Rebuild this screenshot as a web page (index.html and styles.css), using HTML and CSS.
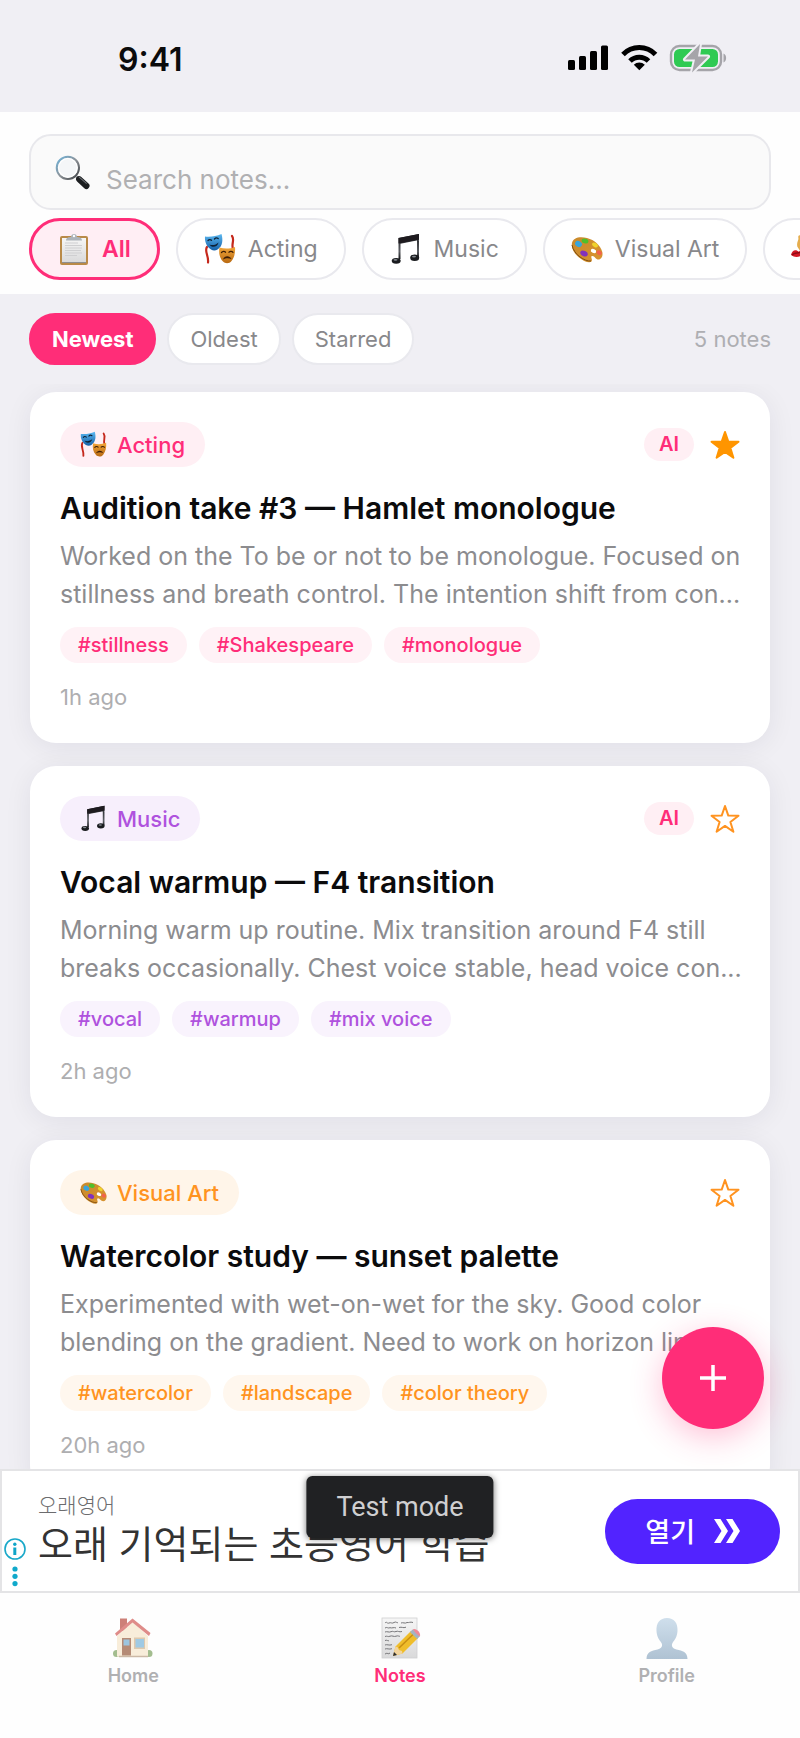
FILE: index.html
```html
<!DOCTYPE html>
<html lang="en">
<head>
<meta charset="utf-8">
<meta name="viewport" content="width=device-width, initial-scale=1">
<title>Notes</title>
<link rel="stylesheet" href="styles.css">
</head>
<body>
<svg class="defs" aria-hidden="true">
  <defs>
    <linearGradient id="g-lens" x1="0" y1="0" x2="1" y2="1"><stop offset="0" stop-color="#6fb4dc"/><stop offset=".5" stop-color="#8d9399"/><stop offset="1" stop-color="#3a3d40"/></linearGradient>
    <linearGradient id="g-blue" x1="0" y1="0" x2="0" y2="1"><stop offset="0" stop-color="#5cb8f0"/><stop offset="1" stop-color="#1560a8"/></linearGradient>
    <linearGradient id="g-gold" x1="0" y1="0" x2="0" y2="1"><stop offset="0" stop-color="#f2a63a"/><stop offset="1" stop-color="#b96a12"/></linearGradient>
    <linearGradient id="g-wood" x1="0" y1="0" x2="1" y2="1"><stop offset="0" stop-color="#c98a2c"/><stop offset="1" stop-color="#d9932f"/></linearGradient>
    <linearGradient id="g-note" x1="0" y1="0" x2="0" y2="1"><stop offset="0" stop-color="#1b1c1f"/><stop offset=".7" stop-color="#5b5e63"/><stop offset="1" stop-color="#16171a"/></linearGradient>
    <linearGradient id="g-bust" x1="0" y1="0" x2="0" y2="1"><stop offset="0" stop-color="#cfdfec"/><stop offset="1" stop-color="#afc2d3"/></linearGradient>
    <linearGradient id="g-paper" x1="0" y1="0" x2="0" y2="1"><stop offset="0" stop-color="#f6f6f6"/><stop offset="1" stop-color="#d9d9da"/></linearGradient>
  </defs>
  <symbol id="i-search" viewBox="0 0 34 34">
    <path d="M21 21l3 3" stroke="#8c9094" stroke-width="3"/>
    <path d="M23.500 23.500l7 6.500" stroke="#1c1e20" stroke-width="6" stroke-linecap="round"/>
    <path d="M23.500 21.500l7 6" stroke="#6d7175" stroke-width="1" stroke-linecap="round"/>
    <circle cx="12.500" cy="12.500" r="10.800" fill="#f4f6f8" stroke="url(#g-lens)" stroke-width="2"/>
    <circle cx="12.500" cy="12.500" r="9" fill="none" stroke="#fff" stroke-width="1"/>
  </symbol>
  <symbol id="i-clip" viewBox="0 0 32 32">
    <rect x="2" y="3" width="28" height="29" rx="2" fill="#b98a48"/>
    <rect x="4" y="5" width="24" height="24.500" fill="url(#g-paper)"/>
    <path d="M4 29.500h24" stroke="#8f8f90" stroke-width="1"/>
    <path d="M7 10h13M7 12.500h17M7 15h17M7 17.500h16M7 20h17M7 22.500h12" stroke="#cfcfd1" stroke-width="1"/>
    <path d="M8 7.500c0-3 3-3.500 5-3.500 0-4 6-4 6 0 2 0 5 .5 5 3.500z" fill="#aeb4ba"/>
    <circle cx="16" cy="3" r="1.200" fill="#fff"/>
  </symbol>
  <symbol id="i-masks" viewBox="0 0 32 32">
    <path d="M3 14c-3 4 2 9 1 15.500M28 3c3 4-1 8 1 13" fill="none" stroke="#c5281c" stroke-width="2.200" stroke-linecap="round"/>
    <path d="M1 3.500c5 .5 11 0 16.500-2.500 1.500 5.500 1.500 12-4 15.500-2 1.300-4.500 1.300-6.500 0C2.500 13.500.5 8.500 1 3.500z" fill="url(#g-blue)"/>
    <path d="M4 7.500c1-1.200 2.500-1.200 3.500-.2M10.500 6c1-1.200 2.700-1.200 3.700-.4" fill="none" stroke="#0e2236" stroke-width="1.300" stroke-linecap="round"/>
    <path d="M5.500 11.500c3 1.200 6.500.5 9-2-.5 4.500-7 6-9 2z" fill="#0e2236"/>
    <path d="M15.500 14.500c5 1.500 10 1.500 15.500-.5.500 5-.5 10.500-3.500 14-2 2.700-6 3-8.500.5-3.500-3.500-4.500-9-3.500-14z" fill="url(#g-gold)"/>
    <path d="M17.500 19.500c1.200-1.400 3-1.500 4-.3M25 19.200c1-1.200 3-1.200 4 .1" fill="none" stroke="#3c1d05" stroke-width="1.300" stroke-linecap="round"/>
    <path d="M19 26.500c1.500-4 6.500-4.200 8.500-.5-2.500-1-6-1-8.500.5z" fill="#3c1d05"/>
  </symbol>
  <symbol id="i-note" viewBox="0 0 32 32">
    <path d="M8.500 5L29 1v6L10.500 10.800V26H8.500zM27 5h2v19h-2z" fill="url(#g-note)"/>
    <path d="M8.500 5L29 1v5.500L8.500 10.500z" fill="#1e1b1f"/>
    <ellipse cx="6.200" cy="27.800" rx="4.500" ry="2.900" fill="#1a1c1f"/>
    <ellipse cx="24.700" cy="24.700" rx="4.500" ry="3.200" fill="#1a1c1f"/>
    <ellipse cx="5.500" cy="26.800" rx="2" ry=".9" fill="#83898f"/>
    <ellipse cx="24" cy="23.600" rx="2" ry=".9" fill="#83898f"/>
  </symbol>
  <symbol id="i-palette" viewBox="0 0 32 32">
    <path d="M1 10C2 4.500 9 3 16 5c7.500 2 13.500 7.500 15.300 14 .9 4-1 7.500-3.800 7.500-3 0-4-4-6.500-3.500-2 .5 1 3.500-.5 5.500-2 2.200-8.500-.5-12.500-4C3 20.500 0 15 1 10z" fill="url(#g-wood)"/>
    <path d="M1 12c1 5 4 9 8 12 3.500 2.500 8 4.500 11 4" fill="none" stroke="#7d4d12" stroke-width="1"/>
    <ellipse cx="22.500" cy="18" rx="2.800" ry="2" fill="#fff" transform="rotate(25 22.500 18)"/>
    <ellipse cx="7.500" cy="11" rx="3.600" ry="2.800" fill="#38a5dc" transform="rotate(30 7.500 11)"/>
    <ellipse cx="14" cy="8" rx="3.500" ry="2.400" fill="#4fc02c" transform="rotate(15 14 8)"/>
    <ellipse cx="24" cy="12" rx="3.200" ry="2" fill="#f0d32d" transform="rotate(35 24 12)"/>
    <ellipse cx="28.200" cy="19.800" rx="2.700" ry="2.200" fill="#f2624c" transform="rotate(35 28.200 19.800)"/>
    <ellipse cx="13" cy="20.500" rx="3.900" ry="2.700" fill="#8231bd" transform="rotate(25 13 20.500)"/>
  </symbol>
  <symbol id="i-dance" viewBox="0 0 32 32">
    <path d="M9 4c1 4-2 5-1 9l2 3" fill="none" stroke="#e5ad4d" stroke-width="3.500" stroke-linecap="round"/>
    <circle cx="15" cy="5" r="4" fill="#5a3016"/>
    <path d="M10 16c4-3 8-3 10 1 3 5 4 8 10 12-9 3-15-2-18-7-4 2-8 3-12 0 1-5 5-6 8-3z" fill="#d31724"/>
    <path d="M1 22c3-3 6-1 8-3M10 26l2 5" stroke="#8e0b16" stroke-width="1.500" fill="none"/>
  </symbol>
  <symbol id="i-home" viewBox="0 0 42 42">
    <circle cx="4.500" cy="36.500" r="3.500" fill="#a3bd8f"/><circle cx="37" cy="36.500" r="3.500" fill="#a3bd8f"/>
    <path d="M8 1.500h7V14H8z" fill="#cd8078"/>
    <path d="M5 19L20.500 5 36 19v20.500H5z" fill="#f8edda"/>
    <path d="M3 16.500L20.500 1.500 38.500 16l-1.500 3L20.500 5.500 4.500 19z" fill="#df8c89"/>
    <path d="M7 39.500h29" stroke="#ccb9a6" stroke-width="1.500"/>
    <rect x="10" y="21" width="9" height="17.500" fill="#b58b76"/><rect x="11.500" y="22.500" width="6" height="6" fill="#9cc5df"/>
    <rect x="22" y="20.500" width="11" height="11.500" fill="#ddc9ae"/><rect x="23.500" y="22" width="8.500" height="8.500" fill="#9fcae4"/>
  </symbol>
  <symbol id="i-memo" viewBox="0 0 42 42">
    <rect x="3" y="1" width="35" height="40" fill="url(#g-paper)" stroke="#d0d0d1" stroke-width=".8"/>
    <path d="M6 6c2-2 2 1 4 0s3 1 5-.5 3 1 4 0M22 6c2-1 4 1 6-.5 2 .5 3-1 6 0M6 11c2-1.500 3 .8 5-.3 2 .8 4-.8 6 .3M20 10.500c3-1 4 1 7-.3M6 15c2-1 4 .8 6-.3s3 .8 5-.2 3 1 6 0M6 19.500c2-1 3 .8 5-.3s4 1 6 0 3 .5 4 0M6 23.500c2-1 3 1 4 0M6 28c2-1 4 .8 7-.3M6 32c2-1 4 .8 7-.3M6 37c3-2 3 1 5-1" fill="none" stroke="#77777a" stroke-width="1"/>
    <path d="M14 39l2.500-9.500L32 14l7 7-15.500 15.500z" fill="#efbd2a"/>
    <path d="M16.500 29.500l2 .5 1.500 3 3 1 .5 2.500L14 39z" fill="#f2d49d"/><path d="M14 39l1-4 3 3z" fill="#2d2d2f"/>
    <path d="M20 31l15-14.500" stroke="#c78d13" stroke-width="1.500"/>
    <path d="M31 15l3-2.800 7 7-2.800 2.800z" fill="#a4b4c0"/><path d="M34 12.200c3-1.500 8 3 7 7-2.500-1-5-3.500-7-7z" fill="#f08a96"/>
  </symbol>
  <symbol id="i-bust" viewBox="0 0 42 42">
    <path d="M21 1c7 0 11 5 10.500 13-.3 6-3 9-5 12-1.500 3 0 5.500 4 6.500 6 1.200 11 2.500 11 9.500H.5C.5 35 5.500 33.700 11.500 32.500c4-1 5.500-3.500 4-6.500-2-3-4.700-6-5-12C10 6 14 1 21 1z" fill="url(#g-bust)"/>
  </symbol>
  <symbol id="i-star" viewBox="0 0 30 30">
    <path d="M15 2l3.300 9.600 10.200.2-8.100 6.200 3 9.700L15 21.900l-8.400 5.800 3-9.700-8.100-6.200 10.200-.2z" stroke-linejoin="round"/>
  </symbol>
</svg>

<div class="app">
  <header class="status">
    <time class="clock">9:41</time>
    <svg class="status-icons" viewBox="0 0 160 30" aria-label="Signal, Wi-Fi, battery charging" role="img">
      <g><rect x="0" y="16" width="7" height="10" rx="1.500"/><rect x="11" y="12" width="7" height="14" rx="1.500"/><rect x="22" y="7" width="7" height="19" rx="1.500"/><rect x="33" y="1.500" width="7" height="24.500" rx="1.500"/></g>
      <g fill="none" stroke="#000" stroke-width="5"><path d="M55 10.500a22.500 22.500 0 0 1 32.500 0"/><path d="M62 17a13 13 0 0 1 18.500 0"/></g>
      <path d="M65.800 20.800a8 8 0 0 1 11 0L71.300 26.300z"/>
      <rect x="103" y="2" width="50" height="24" rx="8.500" fill="none" stroke="#a5a4a9" stroke-width="2.400"/>
      <path d="M155.500 9.500c3.500 1.500 3.500 7.500 0 9z" fill="#a5a4a9"/>
      <rect x="106" y="5" width="44" height="18" rx="5.500" fill="#2fca53"/>
      <path d="M132 0L117 15.500h10L124 28.500 140 12.500h-10z" fill="#a5a4a9" stroke="#f0eff4" stroke-width="4" paint-order="stroke" stroke-linejoin="round"/>
    </svg>
  </header>

  <section class="top">
    <div class="search">
      <label for="q"><svg class="ico-search" aria-label="Search notes" role="img"><use href="#i-search"/></svg></label>
      <input id="q" type="search" placeholder="Search notes...">
    </div>
    <div class="chips">
      <button class="chip on"><svg class="ico"><use href="#i-clip"/></svg>All</button>
      <button class="chip"><svg class="ico"><use href="#i-masks"/></svg>Acting</button>
      <button class="chip"><svg class="ico"><use href="#i-note"/></svg>Music</button>
      <button class="chip"><svg class="ico"><use href="#i-palette"/></svg>Visual Art</button>
      <button class="chip" aria-label="Dance"><svg class="ico"><use href="#i-dance"/></svg></button>
    </div>
  </section>

  <div class="sortbar">
    <button class="sort on">Newest</button>
    <button class="sort">Oldest</button>
    <button class="sort">Starred</button>
    <span class="count">5 notes</span>
  </div>

  <main class="list">
    <article class="card pink">
      <div class="card-head">
        <span class="badge"><svg class="ico-s"><use href="#i-masks"/></svg>Acting</span>
        <span class="ai">AI</span>
        <button class="star full" aria-label="Starred"><svg><use href="#i-star"/></svg></button>
      </div>
      <h2>Audition take #3 — Hamlet monologue</h2>
      <p class="body">Worked on the To be or not to be monologue. Focused on stillness and breath control. The intention shift from con...</p>
      <div class="tags"><span>#stillness</span><span>#Shakespeare</span><span>#monologue</span></div>
      <p class="when">1h ago</p>
    </article>
    <article class="card purple">
      <div class="card-head">
        <span class="badge"><svg class="ico-s"><use href="#i-note"/></svg>Music</span>
        <span class="ai">AI</span>
        <button class="star" aria-label="Star"><svg><use href="#i-star"/></svg></button>
      </div>
      <h2>Vocal warmup — F4 transition</h2>
      <p class="body">Morning warm up routine. Mix transition around F4 still breaks occasionally. Chest voice stable, head voice con...</p>
      <div class="tags"><span>#vocal</span><span>#warmup</span><span>#mix voice</span></div>
      <p class="when">2h ago</p>
    </article>
    <article class="card orange">
      <div class="card-head">
        <span class="badge"><svg class="ico-s"><use href="#i-palette"/></svg>Visual Art</span>
        <button class="star" aria-label="Star"><svg><use href="#i-star"/></svg></button>
      </div>
      <h2>Watercolor study — sunset palette</h2>
      <p class="body">Experimented with wet-on-wet for the sky. Good color blending on the gradient. Need to work on horizon lin...</p>
      <div class="tags"><span>#watercolor</span><span>#landscape</span><span>#color theory</span></div>
      <p class="when">20h ago</p>
    </article>
    <button class="fab" aria-label="New note"><svg viewBox="0 0 26 26"><path d="M13 0v26M0 13h26" stroke="#fff" stroke-width="3.500"/></svg></button>
  </main>

  <aside class="ad" lang="ko">
    <svg class="ad-info" viewBox="0 0 24 52" role="img" aria-label="Ad options">
      <circle cx="12" cy="12" r="10" fill="none" stroke="#19a8c9" stroke-width="1.600"/>
      <path d="M10.300 10.500h3v7.500h-3z" fill="#10a5c8"/><circle cx="11.800" cy="7.200" r="1.700" fill="#10a5c8"/>
      <g fill="#10a9cb"><circle cx="12" cy="32" r="2.600"/><circle cx="12" cy="39.300" r="2.600"/><circle cx="12" cy="46.600" r="2.600"/></g>
    </svg>
    <div class="ad-text">
      <span class="ad-brand">오래영어</span>
      <span class="ad-title">오래 기억되는 초등영어 학습</span>
    </div>
    <button class="ad-cta">열기<svg viewBox="0 0 26 24"><path d="M0 0h6.500l7.500 12-7.500 12H0l7.500-12zM12 0h6.500L26 12l-7.500 12H12l7.500-12z" fill="#fff"/></svg></button>
    <div class="toast" lang="en">Test mode</div>
  </aside>

  <nav class="tabs">
    <a href="#home"><svg><use href="#i-home"/></svg>Home</a>
    <a href="#notes" class="on"><svg><use href="#i-memo"/></svg>Notes</a>
    <a href="#profile"><svg><use href="#i-bust"/></svg>Profile</a>
  </nav>
</div>
</body>
</html>
```
FILE: styles.css
```css
* { box-sizing: border-box; }
body { margin: 0; font-family: Inter, "Noto Sans CJK KR", sans-serif; background: #f0eff4; color: #0b0b0c; }
h2, p { margin: 0; }
button { font: inherit; border: 0; background: none; margin: 0; padding: 0; color: inherit; flex: none; }
svg { display: block; flex: none; }
.defs { position: absolute; width: 0; height: 0; }

.app { display: flex; flex-direction: column; height: 100vh; overflow: hidden; }

.status { display: flex; justify-content: space-between; align-items: center; height: 112px; padding: 6px 72px 0 118px; flex: none; }
.clock { font-size: 32px; font-weight: 600; }
.status-icons { width: 160px; height: 30px; }

.top { background: #fefefe; padding: 22px 0 14px; display: flex; flex-direction: column; gap: 8px; flex: none; }
.search { display: flex; align-items: center; gap: 16px; height: 76px; margin: 0 29px; padding: 0 24px; border: 2px solid #e8e8ec; border-radius: 22px; background: #fafafa; }
.ico-search { width: 35px; height: 35px; }
.search input { flex: 1; min-width: 0; border: 0; outline: 0; background: none; padding: 16px 0 0; font: 400 26px/32px Inter, sans-serif; color: #0b0b0c; }
.search input::placeholder { color: #b0b0b2; opacity: 1; }

.chips { display: flex; gap: 16px; padding: 0 29px; overflow: hidden; }
.chip { display: flex; align-items: center; gap: 12px; height: 62px; padding: 0 26px; border: 2px solid #e9e9ee; border-radius: 31px; background: #fff; font-size: 23px; color: #88888b; }
.chip.on { border: 3px solid #ff2d78; background: #ffeef4; color: #ff2d78; font-weight: 600; }
.ico { width: 32px; height: 32px; }

.sortbar { display: flex; align-items: center; gap: 11px; height: 90px; padding: 0 29px; flex: none; }
.sort { height: 52px; padding: 0 21px; border: 2px solid #e9e9ee; border-radius: 26px; background: #fff; color: #88888b; font-size: 22px; }
.sort.on { background: #ff2d78; border-color: #ff2d78; color: #fff; font-weight: 700; }
.count { margin-left: auto; font-size: 22px; color: #aeaeb2; }

.list { position: relative; flex: 1; min-height: 0; overflow: hidden; padding: 8px 30px; display: flex; flex-direction: column; gap: 23px; }
.card { flex: none; padding: 30px 20px 32px 30px; border-radius: 26px; background: #fff; box-shadow: 0 4px 28px rgba(20, 20, 50, .07); --c: #ff2d78; --bg: #ffeff4; --tag: #fff2f6; }
.purple { --c: #af52de; --bg: #f7effc; --tag: #f9f3fd; }
.orange { --c: #ff9320; --bg: #fff5e9; --tag: #fff7ee; }
.card-head { display: flex; align-items: center; height: 45px; padding-right: 10px; }
.badge { display: flex; align-items: center; gap: 10px; height: 45px; padding: 0 20px; margin-right: auto; border-radius: 23px; background: var(--bg); color: var(--c); font-size: 22px; font-weight: 500; }
.ico-s { width: 27px; height: 27px; }
.ai { padding: 0 15px; border-radius: 17px; background: #ffeff4; color: #ff2d78; font-size: 20px; line-height: 33px; font-weight: 600; }
.star { margin-left: 16px; }
.star svg { width: 30px; height: 30px; fill: none; stroke: #ff9320; stroke-width: 2; }
.star.full svg { fill: #ff9500; stroke: #ff9500; }
.card h2 { margin-top: 22px; font-size: 30px; line-height: 38px; font-weight: 600; }
.body { margin-top: 10px; font-size: 25px; line-height: 38px; color: #8c8c8f; }
.tags { display: flex; gap: 12px; margin-top: 14px; }
.tags span { padding: 0 18px; border-radius: 18px; background: var(--tag); color: var(--c); font-size: 20px; line-height: 36px; font-weight: 500; }
.when { margin-top: 20px; font-size: 22px; line-height: 28px; color: #aeaeb0; }

.fab { position: absolute; right: 36px; bottom: 40px; width: 102px; height: 102px; border-radius: 50%; background: #ff2d78; display: grid; place-items: center; box-shadow: 0 8px 32px rgba(255, 45, 120, .3); }
.fab svg { width: 26px; height: 26px; }

.ad { position: relative; flex: none; display: flex; align-items: center; height: 124px; padding: 0 18px 0 1px; border: 2px solid #e4e4e6; background: #fff; }
.ad-info { width: 24px; height: 52px; margin-top: 64px; }
.ad-text { display: flex; flex-direction: column; flex: 1; margin-left: 11px; padding-bottom: 8px; font-family: "Noto Sans CJK KR", sans-serif; white-space: nowrap; }
.ad-brand { font-size: 21px; line-height: 30px; color: #6c6c6e; font-weight: 300; }
.ad-title { font-size: 38px; line-height: 46px; color: #333; }
.ad-cta { display: flex; align-items: center; gap: 19px; height: 65px; padding: 0 40px; border-radius: 33px; background: #5223ff; color: #fff; font: 500 27px/40px "Noto Sans CJK KR", sans-serif; }
.ad-cta svg { width: 26px; height: 24px; }
.toast { position: absolute; left: 50%; top: 5px; transform: translateX(-50%); padding: 0 30px; border-radius: 6px; background: #202123; color: #cfcfd1; font: 400 27px/62px Roboto, sans-serif; white-space: nowrap; box-shadow: 0 1px 6px rgba(0, 0, 0, .5); }

.tabs { flex: none; display: grid; grid-template-columns: repeat(3, 1fr); height: 145px; padding-top: 24px; background: #fefefe; }
.tabs a { display: flex; flex-direction: column; align-items: center; gap: 6px; font-size: 18px; line-height: 22px; font-weight: 600; color: #b0b0b2; text-decoration: none; }
.tabs a.on { color: #ff2d78; }
.tabs svg { width: 42px; height: 42px; }
```
